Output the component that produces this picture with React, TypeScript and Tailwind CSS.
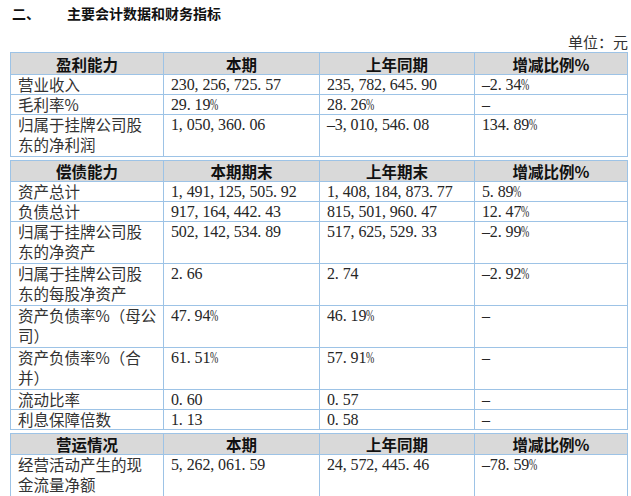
type Row = [string, string, string, string];

const sections: { head: Row; rows: Row[]; first?: boolean }[] = [
  {
    head: ["盈利能力", "本期", "上年同期", "增减比例%"],
    first: true,
    rows: [
      ["营业收入", "230,256,725.57", "235,782,645.90", "-2.34%"],
      ["毛利率%", "29.19%", "28.26%", "-"],
      ["归属于挂牌公司股\n东的净利润", "1,050,360.06", "-3,010,546.08", "134.89%"],
    ],
  },
  {
    head: ["偿债能力", "本期期末", "上年期末", "增减比例%"],
    rows: [
      ["资产总计", "1,491,125,505.92", "1,408,184,873.77", "5.89%"],
      ["负债总计", "917,164,442.43", "815,501,960.47", "12.47%"],
      ["归属于挂牌公司股\n东的净资产", "502,142,534.89", "517,625,529.33", "-2.99%"],
      ["归属于挂牌公司股\n东的每股净资产", "2.66", "2.74", "-2.92%"],
      ["资产负债率%（母公\n司）", "47.94%", "46.19%", "-"],
      ["资产负债率%（合\n并）", "61.51%", "57.91%", "-"],
      ["流动比率", "0.60", "0.57", "-"],
      ["利息保障倍数", "1.13", "0.58", "-"],
    ],
  },
  {
    head: ["营运情况", "本期", "上年同期", "增减比例%"],
    rows: [["经营活动产生的现\n金流量净额", "5,262,061.59", "24,572,445.46", "-78.59%"]],
  },
];

// half-width figures like the song-style font of the source document
const Num = ({ v }: { v: string }) => (
  <div className="flex leading-[20px] h-[20px] font-['Liberation_Serif',serif] text-[16px] whitespace-nowrap">
    {v.split("").map((c, i) =>
      c === "%" ? (
        <span key={i} className="inline-block shrink-0 w-[8px]">
          <span className="inline-block origin-left scale-x-[0.62]">%</span>
        </span>
      ) : (
        <span key={i} className="inline-block shrink-0 w-[7.85px]">
          {c === "-" ? "–" : c}
        </span>
      )
    )}
  </div>
);

const cell = "border border-[#9dc3e6] px-[7px] py-0 align-top";

const App = () => {
  return (
    <div className="w-[631px] h-[496px] overflow-hidden bg-white text-[#262626] font-['Noto_Sans_CJK_SC',sans-serif]">
      <div className="flex items-center h-[26px] pl-3 text-[14px] font-bold text-[#111]">
        <span className="w-[55px]">二、</span>
        <span>主要会计数据和财务指标</span>
      </div>
      <div className="mt-[6px] h-[20px] leading-[20px] text-right pr-[3px] text-[15px] text-[#333]">单位：元</div>

      <div className="pl-[10px] flex flex-col gap-[3px]">
        {sections.map((s, si) => (
          <table key={si} className="table-fixed border-collapse w-[617px] text-[15.5px]">
            <colgroup>
              <col className="w-[153px]" />
              <col className="w-[156px]" />
              <col className="w-[155px]" />
              <col className="w-[153px]" />
            </colgroup>
            <thead>
              <tr className="bg-[#d9d9d9]">
                {s.head.map((h, i) => (
                  <th key={i} className={`${cell} font-bold text-[#111]`}>
                    <div className={`${s.first ? "h-[21px]" : "h-[20px]"} flex items-center justify-center leading-[20px]`}>
                      {h}
                    </div>
                  </th>
                ))}
              </tr>
            </thead>
            <tbody>
              {s.rows.map((r, ri) => {
                const tall = r[0].includes("\n");
                const h = tall ? "h-[41px]" : "h-[19px]";
                return (
                  <tr key={ri}>
                    <td className={cell}>
                      <div className={`${h} leading-[20px] whitespace-nowrap text-[#333]`}>
                        <div className="-mt-[1px]">
                          {r[0].split("\n").map((line, i) => (
                            <div key={i}>{line}</div>
                          ))}
                        </div>
                      </div>
                    </td>
                    {r.slice(1).map((v, i) => (
                      <td key={i} className={cell}>
                        <div className={h}>
                          <Num v={v} />
                        </div>
                      </td>
                    ))}
                  </tr>
                );
              })}
            </tbody>
          </table>
        ))}
      </div>
    </div>
  );
};

export default App;
